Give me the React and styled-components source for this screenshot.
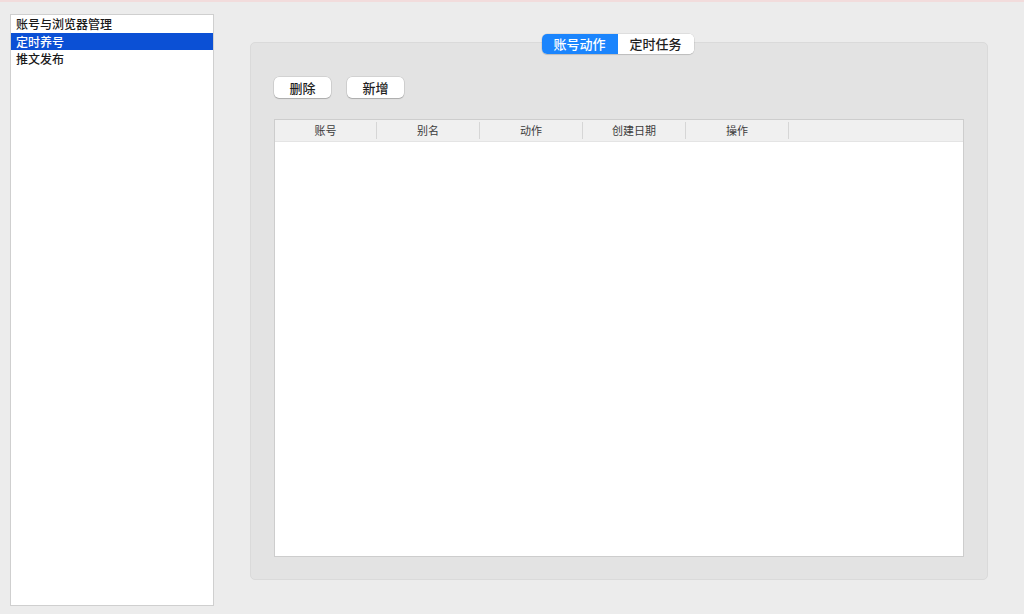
import React, { useState } from "react";
import styled, { createGlobalStyle } from "styled-components";

const GlobalStyle = createGlobalStyle`
  html, body { margin: 0; padding: 0; }
  body {
    background: #ececec;
    font-family: "PingFang SC", "Noto Sans CJK SC", "Noto Sans", sans-serif;
    color: #222;
  }
`;

const TopLine = styled.div`
  height: 2px;
  background: #f2dcdc;
`;

const Layout = styled.div`
  display: flex;
  height: 612px;
  box-sizing: border-box;
  padding: 12px 36px 8px 10px;
  gap: 36px;
`;

const Sidebar = styled.div`
  width: 204px;
  flex-shrink: 0;
  background: #fff;
  border: 1px solid #cfcfcf;
  box-sizing: border-box;
  display: flex;
  flex-direction: column;
`;

const SideItem = styled.div`
  height: 17.5px;
  line-height: 17.5px;
  font-size: 12px;
  font-weight: 500;
  padding-left: 5px;
  background: ${(p) => (p.$active ? "#0b50d5" : "transparent")};
  color: ${(p) => (p.$active ? "#fff" : "#1a1a1a")};
`;

const Main = styled.div`
  flex: 1;
  display: flex;
  flex-direction: column;
  padding-top: 20px;
  padding-bottom: 26px;
`;

const TabBar = styled.div`
  display: flex;
  justify-content: center;
  position: relative;
  z-index: 1;
  margin-bottom: -12px;
  padding-right: 3px;
`;

const Segment = styled.div`
  display: flex;
  border-radius: 5px;
  box-shadow: 0 0 0 0.5px rgba(0, 0, 0, 0.12), 0 1px 1px rgba(0, 0, 0, 0.12);
  overflow: hidden;
  background: #fff;
`;

const Tab = styled.div`
  width: 76px;
  height: 20px;
  line-height: 20px;
  text-align: center;
  font-size: 13px;
  font-weight: 500;
  background: ${(p) => (p.$active ? "#1b85fd" : "#fff")};
  color: ${(p) => (p.$active ? "#fff" : "#1e1e1e")};
`;

const Panel = styled.div`
  flex: 1;
  background: #e3e3e3;
  border: 1px solid #dadada;
  border-radius: 5px;
  box-sizing: border-box;
  padding: 34px 23px 22px 23px;
  display: flex;
  flex-direction: column;
`;

const Toolbar = styled.div`
  display: flex;
  gap: 16px;
  margin-bottom: 21px;
`;

const Button = styled.button`
  width: 57px;
  height: 21px;
  border: none;
  border-radius: 5px;
  background: #fff;
  box-shadow: 0 0 0 0.5px rgba(0, 0, 0, 0.15), 0 1px 1px rgba(0, 0, 0, 0.18);
  font-family: inherit;
  font-size: 13px;
  font-weight: 500;
  color: #1e1e1e;
  padding: 0;
  line-height: 21px;
`;

const Table = styled.div`
  flex: 1;
  background: #fff;
  border: 1px solid #cdcdcd;
  display: flex;
  flex-direction: column;
`;

const HeaderRow = styled.div`
  display: flex;
  height: 21px;
  background: #f0f0f0;
  border-bottom: 1px solid #e4e4e4;
`;

const HeaderCell = styled.div`
  width: ${(p) => (p.$first ? 102 : 103)}px;
  flex-shrink: 0;
  box-sizing: border-box;
  border-right: 1px solid #d6d6d6;
  margin: 2px 0;
  height: 17px;
  line-height: 17px;
  text-align: center;
  font-size: 11px;
  color: #3c3c3c;
`;

const Body = styled.div`
  flex: 1;
`;

const columns = ["账号", "别名", "动作", "创建日期", "操作"];

export default function App() {
  const [sel, setSel] = useState(1);
  const [tab, setTab] = useState(0);
  const items = ["账号与浏览器管理", "定时养号", "推文发布"];
  return (
    <>
      <GlobalStyle />
      <TopLine />
      <Layout>
        <Sidebar>
          {items.map((t, i) => (
            <SideItem key={t} $active={i === sel} onClick={() => setSel(i)}>
              {t}
            </SideItem>
          ))}
        </Sidebar>
        <Main>
          <TabBar>
            <Segment>
              {["账号动作", "定时任务"].map((t, i) => (
                <Tab key={t} $active={i === tab} onClick={() => setTab(i)}>
                  {t}
                </Tab>
              ))}
            </Segment>
          </TabBar>
          <Panel>
            <Toolbar>
              <Button>删除</Button>
              <Button>新增</Button>
            </Toolbar>
            <Table>
              <HeaderRow>
                {columns.map((c, i) => (
                  <HeaderCell key={c} $first={i === 0}>
                    {c}
                  </HeaderCell>
                ))}
              </HeaderRow>
              <Body />
            </Table>
          </Panel>
        </Main>
      </Layout>
    </>
  );
}
